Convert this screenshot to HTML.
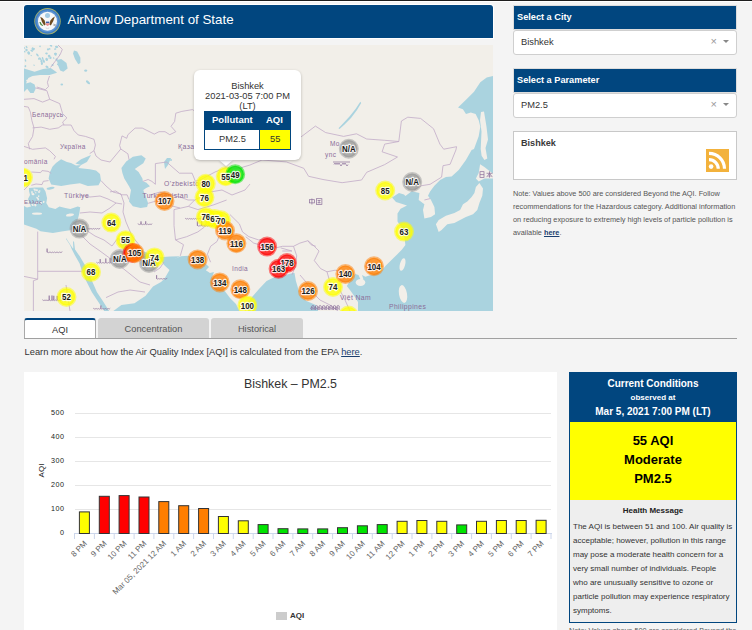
<!DOCTYPE html>
<html><head><meta charset="utf-8">
<style>
html,body{margin:0;padding:0;}
body{width:752px;height:630px;overflow:hidden;background:#f4f4f4;position:relative;font-family:"Liberation Sans",sans-serif;color:#333;}
.abs{position:absolute;}
#topline{left:0;top:0;width:752px;height:1px;background:#1e1e1e;}
#topline2{left:0;top:1px;width:752px;height:1px;background:#fff;}
#hdrb{left:23px;top:4px;width:471px;height:35px;background:#fff;border-radius:4px 4px 0 0;}
#hdr{left:24px;top:5px;width:469px;height:33px;background:#01467f;border-radius:3px 3px 0 0;}
#hdr .t{position:absolute;left:43.5px;top:7px;font-size:13.35px;color:#fff;white-space:nowrap;line-height:16px;}
#mapwrap{left:24px;top:45px;width:469px;height:266px;overflow:hidden;}
#map text.mk{font:bold 8.8px "Liberation Sans",sans-serif;fill:#1a1a1a;text-anchor:middle;stroke:#fff;stroke-width:2.2px;stroke-opacity:.85;paint-order:stroke;stroke-linejoin:round;}
.popup{left:194px;top:70px;width:107px;height:90px;background:#fff;border-radius:6px;box-shadow:0 1px 3px rgba(0,0,0,.25);}
.tipc{left:218.5px;top:159.5px;width:0;height:0;border-left:7px solid transparent;border-right:7px solid transparent;border-top:6.5px solid #fff;filter:drop-shadow(0 1px 1px rgba(0,0,0,.2));}
.popup .ln{position:absolute;left:0;width:107px;text-align:center;font-size:9.3px;line-height:10px;color:#333;}
.ptab{left:204px;top:111px;width:87px;height:39px;border:1px solid #01467f;box-sizing:border-box;background:#fff;}
.ptab .h{position:absolute;left:0;top:0;width:85px;height:18px;background:#01467f;}
.ptab .h span{position:absolute;top:2px;font:bold 9.5px "Liberation Sans",sans-serif;color:#fff;}
.ptab .y{position:absolute;left:54px;top:18px;width:30px;height:19px;background:#ffff00;border-left:1px solid #01467f;}
.ptab .c{position:absolute;top:22px;font-size:9.3px;color:#333;}
.sh{left:513px;width:222px;height:23px;background:#01467f;border:1px solid #ddd;}
.sh span{position:absolute;left:3px;top:5.5px;font:bold 9.2px "Liberation Sans",sans-serif;color:#fff;}
.sel{left:513px;width:222px;height:23px;background:#fff;border:1px solid #cfcfcf;border-radius:3px;}
.sel span{position:absolute;left:7px;top:6px;font-size:9.3px;color:#333;}
.sel .x{left:auto;right:19px;top:3.5px;font-size:11px;color:#999;}
.sel .ar{position:absolute;right:7px;top:9px;width:0;height:0;border-left:3.5px solid transparent;border-right:3.5px solid transparent;border-top:3.5px solid #888;}
#cbox{left:513px;top:131px;width:222px;height:47px;background:#fff;border:1px solid #c8c8c8;}
#cbox span{position:absolute;left:7px;top:5.8px;font:bold 9.1px "Liberation Sans",sans-serif;color:#3a3a3a;}
#rss{left:706px;top:149px;width:23px;height:23px;background:#f3b23c;}
#note{left:513px;top:187px;width:230px;font-size:7.33px;line-height:13px;color:#555;}
#note a{color:#1a3f6f;font-weight:bold;text-decoration:underline;}
.tab{top:318px;height:20px;box-sizing:border-box;text-align:center;font-size:9.3px;line-height:18px;border-radius:3px 3px 0 0;}
#tab1{left:24px;width:72px;background:#fff;border:1px solid #a9a9a9;border-top:2px solid #01467f;border-bottom:none;color:#333;line-height:20px;}
#tab2{left:98px;width:111px;background:#d3d3d3;color:#555;line-height:23px;}
#tab3{left:211px;width:92px;background:#d3d3d3;color:#555;line-height:23px;}
#tabline{left:24px;top:338px;width:713px;height:1px;background:#a0a0a0;}
#learn{left:24.5px;top:347px;font-size:9.33px;line-height:11px;color:#333;white-space:nowrap;}
#learn a{color:#1a3f6f;text-decoration:underline;}
.yl{font:7.2px "Liberation Sans",sans-serif;fill:#222;letter-spacing:.5px;}
.xl{font:8px "Liberation Sans",sans-serif;fill:#666;}
.ct{font:12.4px "Liberation Sans",sans-serif;fill:#333;}
.yt{font:8px "Liberation Sans",sans-serif;fill:#222;}
.lg{font:bold 8px "Liberation Sans",sans-serif;fill:#333;}
#cc{left:569px;top:372px;width:168px;height:251px;box-sizing:border-box;border:1px solid #01467f;background:#eee;}
#cc .hd{position:absolute;left:0;top:0;width:166px;height:49px;background:#01467f;color:#fff;text-align:center;font-weight:bold;}
#cc .yl2{position:absolute;left:0;top:49px;width:166px;height:78px;background:#ffff00;color:#000;text-align:center;font-weight:bold;font-size:13px;line-height:19px;}
#cc .hm{position:absolute;left:0;top:133px;width:166px;text-align:center;font:bold 8px "Liberation Sans",sans-serif;color:#222;}
#cc .bd{position:absolute;left:3px;top:147px;width:162px;font-size:8px;line-height:14px;color:#333;}
#note2{left:569px;top:625.5px;font-size:7.33px;color:#555;white-space:nowrap;}
</style></head>
<body>
<div id="topline" class="abs"></div><div id="topline2" class="abs"></div>
<div id="hdrb" class="abs"></div>
<div id="hdr" class="abs">
  <svg class="abs" style="left:9px;top:2px" width="29" height="29" viewBox="0 0 29 29">
    <circle cx="14.5" cy="14.3" r="13.2" fill="#a7b26a"/>
    <circle cx="14.5" cy="14.3" r="12.4" fill="#3f7ec6"/>
    <circle cx="14.5" cy="14.3" r="11" fill="#5b93d2"/>
    <circle cx="14.5" cy="14.3" r="9.5" fill="#f7f8f8"/>
    <circle cx="14.5" cy="8.5" r="2.5" fill="#a3cbe4"/>
    <path d="M7.2 9.8 Q9.5 10.5 11.6 13.5 L12.6 17.5 L11.2 18.5 Q8.5 15 7.2 9.8z" fill="#6e4b1f"/>
    <path d="M21.8 9.6 Q19.5 10.5 17.4 13.5 L16.4 17.5 L17.8 18.5 Q20.5 15 21.8 9.6z" fill="#6e4b1f"/>
    <rect x="12.9" y="14.6" width="3.4" height="1.6" fill="#3b5ca8"/>
    <path d="M12.9 16.2 h3.4 v1.6 q-1.7 2.2 -3.4 0z" fill="#ea8d91"/>
    <path d="M6.3 15.2 q0.6 2.8 3.4 3.9 l0.6 -0.6 q-2 -1.2 -2.6 -3.6z" fill="#4c8a45"/>
    <path d="M20.5 17 l2.8 1.2 M20.2 18 l2.8 1.2" stroke="#9a9a9a" stroke-width="0.8"/>
    <path d="M12.5 20 q2 2 4 0 l-0.5 1.8 h-3z" fill="#d8d8d8"/>
  </svg>
  <div class="t">AirNow Department of State</div>
</div>
<div id="mapwrap" class="abs">
<svg id="map" width="469" height="266" viewBox="24 45 469 266">
<rect x="0" y="0" width="800" height="400" fill="#f2efe9"/>
<polygon fill="#aad3df" points="493.0,75.9 486.7,77.5 480.3,82.2 474.0,91.7 466.0,99.7 458.0,107.6 462.9,109.2 466.0,114.0 470.8,112.4 475.6,114.0 478.7,120.3 480.3,126.7 478.7,136.2 474.0,148.9 471.6,150.0 465.9,160.0 458.7,170.0 451.6,176.4 445.9,177.1 440.1,180.0 434.4,185.7 430.1,191.4 428.0,195.7 431.0,200.0 434.4,207.1 435.1,214.3 431.0,217.0 424.4,218.6 423.0,210.0 424.4,204.3 418.7,200.0 419.4,192.9 411.7,191.3 405.4,196.0 404.0,194.4 399.0,193.0 392.0,197.6 396.0,202.0 407.0,205.5 400.6,208.7 397.5,213.5 397.5,221.4 400.6,226.0 404.0,234.0 405.4,245.0 402.0,249.6 394.0,257.6 385.9,265.6 380.3,272.1 371.0,274.9 365.4,276.8 362.0,275.0 363.5,279.5 361.0,280.5 358.5,275.0 355.1,274.0 350.5,280.0 346.8,286.1 350.5,290.7 355.1,297.2 358.0,301.9 358.0,312.0 494.0,312.0 494.0,75.9"/>
<polygon fill="#aad3df" points="159.6,257.6 164.3,257.2 174.0,259.0 181.0,256.2 188.3,255.8 196.0,258.5 204.3,262.2 209.0,267.0 205.8,270.2 210.0,273.0 214.0,272.0 212.0,277.0 216.0,280.0 220.0,284.0 224.0,290.0 230.0,298.0 236.0,304.0 240.0,312.0 248.0,312.0 248.0,302.0 252.0,297.0 259.0,289.0 266.6,281.0 274.6,277.0 283.9,275.6 287.9,274.3 293.2,273.0 294.5,273.0 295.9,281.0 298.0,288.0 299.9,294.3 306.5,300.9 315.8,304.9 318.5,312.0 112.0,312.0 121.4,305.0 134.5,303.2 145.6,295.7 153.0,286.4 161.0,282.0 164.3,279.0 169.5,270.0 163.8,264.7"/>
<polygon fill="#aad3df" points="65.9,238.8 70.0,245.0 71.7,248.9 75.3,256.1 79.6,263.4 81.8,270.6 86.1,280.7 91.9,292.3 97.7,300.9 104.9,312.0 109.8,312.0 102.8,300.9 97.0,292.3 91.9,280.7 88.3,270.6 84.0,263.4 79.6,256.1 75.0,249.5 74.0,241.5 73.0,241.5 73.3,248.5 72.6,248.0 67.3,240.0 66.5,238.5"/>
<polygon fill="#aad3df" points="118.0,238.0 124.0,241.0 130.0,245.0 140.0,250.0 148.0,253.0 156.0,256.0 159.6,257.6 150.0,259.0 140.0,257.0 130.0,255.0 124.0,251.0 120.0,245.0"/>
<polygon fill="#aad3df" points="29.0,188.0 35.0,187.4 43.0,187.4 45.5,191.6 47.1,198.2 46.3,203.1 48.8,207.3 55.4,208.9 59.5,206.4 65.3,208.1 70.3,208.9 77.7,206.4 80.2,207.3 79.4,213.1 77.7,219.7 74.0,228.0 71.7,230.1 61.6,231.6 52.9,233.0 40.5,231.2 36.4,228.8 29.0,226.3 24.0,224.6 24.0,206.0 27.0,207.5 31.0,206.5 29.5,203.0 28.0,199.0 30.0,195.0 29.0,191.0"/>
<polygon fill="#aad3df" points="52.6,166.6 50.0,172.0 48.6,178.6 51.2,184.6 61.2,186.0 70.0,184.6 79.9,183.3 87.8,186.0 98.5,185.3 101.0,180.6 100.0,174.0 96.0,170.5 89.7,169.3 78.3,167.9 81.1,165.0 76.0,165.5 71.0,163.0 66.9,162.1 61.1,159.3 56.0,163.0"/>
<polygon fill="#aad3df" points="75.4,163.6 81.1,159.3 91.1,155.0 86.9,162.1 81.1,165.0"/>
<polygon fill="#aad3df" points="121.4,168.1 126.2,161.4 132.9,156.7 141.4,155.2 145.7,158.6 143.3,163.3 137.6,167.1 134.8,169.0 138.6,171.9 142.4,178.6 142.9,181.4 146.2,182.4 150.0,186.2 146.2,188.1 143.3,190.0 144.3,192.9 146.2,197.6 148.1,203.3 147.1,207.1 140.5,208.1 132.9,206.2 129.0,201.4 130.0,195.7 131.0,190.0 129.0,186.2 124.3,178.6 122.4,172.9"/>
<polygon fill="#aad3df" points="24.0,68.5 34.6,71.7 43.0,69.0 50.6,68.0 56.0,71.7 57.0,72.7 49.5,74.9 40.0,74.9 32.5,76.0 28.3,78.0 26.0,83.4 30.4,82.3 34.6,84.4 35.7,88.7 33.6,93.0 30.4,93.0 27.2,88.7 24.0,92.0"/>
<polygon fill="#aad3df" points="57.0,60.0 61.2,58.9 66.5,63.1 67.6,68.5 63.4,71.7 60.2,70.6 58.0,65.3"/>
<polygon fill="#aad3df" points="74.0,50.4 77.2,51.4 80.4,57.8 80.4,63.1 78.3,64.2 75.0,58.9 73.0,53.6"/>
<polygon fill="#aad3df" points="360.3,101.8 361.2,103.0 357.0,110.0 351.0,118.0 344.0,125.0 339.5,129.0 338.5,128.2 343.0,123.5 349.5,116.5 355.5,109.0"/>
<polygon fill="#aad3df" points="164.0,162.0 167.0,158.0 171.0,158.0 168.0,165.0 165.0,169.0"/>
<polygon fill="#aad3df" points="159.6,257.2 170.0,256.5 180.0,256.2 175.0,259.0 169.0,262.0 164.0,262.0"/>
<polygon fill="#f2efe9" points="479.4,182.9 483.0,188.6 482.3,195.7 479.4,202.9 477.3,210.0 473.0,214.3 465.9,217.1 460.1,220.0 454.4,222.9 447.3,224.3 441.6,230.0 438.7,232.1 435.9,224.3 438.7,220.0 445.9,215.7 454.4,212.9 460.1,210.0 463.0,204.3 467.3,201.4 471.6,197.1 474.4,192.9 475.9,187.1"/>
<polygon fill="#f2efe9" points="480.1,164.3 484.4,167.1 490.1,171.4 494.0,174.3 494.0,178.6 484.4,178.6 478.7,181.4 475.9,178.6 478.7,172.9"/>
<polygon fill="#f2efe9" points="481.0,112.0 484.0,111.5 486.5,126.7 488.0,139.4 485.5,148.0 487.3,158.6 484.4,160.0 481.6,155.7 480.7,148.9 481.5,131.4 480.0,120.3"/>
<polygon fill="#f2efe9" points="26.0,80.0 30.0,79.0 33.0,80.0 31.0,82.0 27.0,82.0"/>
<ellipse cx="360.5" cy="282.5" rx="4.8" ry="3.4" transform="rotate(0 360.5 282.5)" fill="#f2efe9"/>
<ellipse cx="402.5" cy="264.5" rx="2.6" ry="6.5" transform="rotate(15 402.5 264.5)" fill="#f2efe9"/>
<ellipse cx="403.0" cy="294.0" rx="4.0" ry="9.0" transform="rotate(-10 403.0 294.0)" fill="#f2efe9"/>
<ellipse cx="70.0" cy="215.0" rx="4.0" ry="1.4" transform="rotate(-10 70.0 215.0)" fill="#f2efe9"/>
<ellipse cx="37.0" cy="213.7" rx="5.0" ry="1.1" transform="rotate(0 37.0 213.7)" fill="#f2efe9"/>
<ellipse cx="37.4" cy="198.0" rx="1.4" ry="0.8" transform="rotate(46 37.4 198.0)" fill="#f2efe9"/>
<ellipse cx="39.0" cy="192.0" rx="1.0" ry="0.9" transform="rotate(71 39.0 192.0)" fill="#f2efe9"/>
<ellipse cx="33.1" cy="193.9" rx="0.6" ry="1.0" transform="rotate(62 33.1 193.9)" fill="#f2efe9"/>
<ellipse cx="32.5" cy="204.7" rx="1.5" ry="0.9" transform="rotate(55 32.5 204.7)" fill="#f2efe9"/>
<ellipse cx="33.9" cy="189.2" rx="1.0" ry="0.4" transform="rotate(17 33.9 189.2)" fill="#f2efe9"/>
<ellipse cx="34.9" cy="189.5" rx="1.0" ry="0.8" transform="rotate(76 34.9 189.5)" fill="#f2efe9"/>
<ellipse cx="38.2" cy="199.2" rx="1.0" ry="0.9" transform="rotate(41 38.2 199.2)" fill="#f2efe9"/>
<ellipse cx="35.3" cy="205.0" rx="1.5" ry="1.1" transform="rotate(64 35.3 205.0)" fill="#f2efe9"/>
<ellipse cx="35.8" cy="192.7" rx="0.8" ry="0.5" transform="rotate(69 35.8 192.7)" fill="#f2efe9"/>
<ellipse cx="36.8" cy="202.5" rx="0.9" ry="1.2" transform="rotate(76 36.8 202.5)" fill="#f2efe9"/>
<ellipse cx="32.0" cy="192.4" rx="1.4" ry="0.8" transform="rotate(88 32.0 192.4)" fill="#f2efe9"/>
<ellipse cx="36.8" cy="190.2" rx="1.1" ry="1.0" transform="rotate(24 36.8 190.2)" fill="#f2efe9"/>
<ellipse cx="33.0" cy="194.3" rx="1.5" ry="1.0" transform="rotate(11 33.0 194.3)" fill="#f2efe9"/>
<ellipse cx="35.0" cy="190.6" rx="0.6" ry="1.0" transform="rotate(16 35.0 190.6)" fill="#f2efe9"/>
<ellipse cx="38.7" cy="196.2" rx="0.7" ry="1.0" transform="rotate(12 38.7 196.2)" fill="#f2efe9"/>
<ellipse cx="39.7" cy="190.9" rx="0.9" ry="0.6" transform="rotate(24 39.7 190.9)" fill="#f2efe9"/>
<ellipse cx="43.7" cy="201.9" rx="0.8" ry="1.1" transform="rotate(19 43.7 201.9)" fill="#f2efe9"/>
<ellipse cx="36.7" cy="202.7" rx="1.1" ry="0.5" transform="rotate(89 36.7 202.7)" fill="#f2efe9"/>
<ellipse cx="41.0" cy="203.0" rx="1.0" ry="1.5" transform="rotate(0 41.0 203.0)" fill="#f2efe9"/>
<ellipse cx="50.6" cy="188.3" rx="4.0" ry="1.2" transform="rotate(-10 50.6 188.3)" fill="#aad3df"/>
<ellipse cx="85.7" cy="70.6" rx="1.5" ry="1.2" transform="rotate(0 85.7 70.6)" fill="#aad3df"/>
<ellipse cx="88.0" cy="82.3" rx="2.5" ry="1.2" transform="rotate(40 88.0 82.3)" fill="#aad3df"/>
<ellipse cx="61.8" cy="84.4" rx="1.3" ry="1.0" transform="rotate(0 61.8 84.4)" fill="#aad3df"/>
<ellipse cx="171.0" cy="160.0" rx="1.0" ry="1.0" transform="rotate(0 171.0 160.0)" fill="#aad3df"/>
<ellipse cx="31.7" cy="50.7" rx="1.5" ry="0.8" transform="rotate(27 31.7 50.7)" fill="#aad3df"/>
<ellipse cx="26.6" cy="47.0" rx="1.3" ry="0.7" transform="rotate(54 26.6 47.0)" fill="#aad3df"/>
<ellipse cx="37.4" cy="55.0" rx="1.8" ry="0.9" transform="rotate(52 37.4 55.0)" fill="#aad3df"/>
<ellipse cx="55.2" cy="49.0" rx="0.8" ry="1.2" transform="rotate(74 55.2 49.0)" fill="#aad3df"/>
<ellipse cx="33.0" cy="49.2" rx="1.5" ry="1.3" transform="rotate(18 33.0 49.2)" fill="#aad3df"/>
<ellipse cx="58.2" cy="64.4" rx="1.3" ry="0.8" transform="rotate(9 58.2 64.4)" fill="#aad3df"/>
<ellipse cx="25.4" cy="66.2" rx="0.9" ry="1.1" transform="rotate(23 25.4 66.2)" fill="#aad3df"/>
<ellipse cx="53.7" cy="58.1" rx="1.0" ry="0.6" transform="rotate(65 53.7 58.1)" fill="#aad3df"/>
<ellipse cx="26.5" cy="50.0" rx="1.3" ry="1.2" transform="rotate(55 26.5 50.0)" fill="#aad3df"/>
<ellipse cx="34.1" cy="65.2" rx="0.8" ry="0.5" transform="rotate(24 34.1 65.2)" fill="#aad3df"/>
<ellipse cx="40.0" cy="46.3" rx="0.8" ry="0.8" transform="rotate(51 40.0 46.3)" fill="#aad3df"/>
<ellipse cx="28.7" cy="53.0" rx="1.7" ry="1.3" transform="rotate(59 28.7 53.0)" fill="#aad3df"/>
<ellipse cx="48.9" cy="57.9" rx="0.8" ry="0.5" transform="rotate(2 48.9 57.9)" fill="#aad3df"/>
<ellipse cx="56.8" cy="60.4" rx="1.8" ry="0.5" transform="rotate(57 56.8 60.4)" fill="#aad3df"/>
<ellipse cx="41.4" cy="61.1" rx="1.0" ry="1.3" transform="rotate(7 41.4 61.1)" fill="#aad3df"/>
<ellipse cx="43.7" cy="61.2" rx="1.7" ry="1.1" transform="rotate(63 43.7 61.2)" fill="#aad3df"/>
<ellipse cx="52.6" cy="65.1" rx="1.0" ry="1.0" transform="rotate(81 52.6 65.1)" fill="#aad3df"/>
<ellipse cx="55.4" cy="54.2" rx="1.5" ry="1.2" transform="rotate(52 55.4 54.2)" fill="#aad3df"/>
<ellipse cx="46.5" cy="53.4" rx="1.3" ry="1.0" transform="rotate(7 46.5 53.4)" fill="#aad3df"/>
<ellipse cx="47.0" cy="66.9" rx="1.7" ry="1.1" transform="rotate(35 47.0 66.9)" fill="#aad3df"/>
<ellipse cx="50.5" cy="57.8" rx="1.1" ry="1.2" transform="rotate(8 50.5 57.8)" fill="#aad3df"/>
<ellipse cx="51.0" cy="45.7" rx="1.3" ry="0.9" transform="rotate(21 51.0 45.7)" fill="#aad3df"/>
<ellipse cx="49.1" cy="55.9" rx="1.3" ry="1.2" transform="rotate(23 49.1 55.9)" fill="#aad3df"/>
<ellipse cx="24.4" cy="51.6" rx="1.4" ry="0.7" transform="rotate(15 24.4 51.6)" fill="#aad3df"/>
<ellipse cx="56.6" cy="59.5" rx="1.1" ry="1.2" transform="rotate(29 56.6 59.5)" fill="#aad3df"/>
<ellipse cx="48.0" cy="49.4" rx="1.1" ry="1.1" transform="rotate(82 48.0 49.4)" fill="#aad3df"/>
<ellipse cx="55.7" cy="53.5" rx="1.3" ry="0.8" transform="rotate(12 55.7 53.5)" fill="#aad3df"/>
<ellipse cx="41.9" cy="63.4" rx="1.6" ry="1.1" transform="rotate(86 41.9 63.4)" fill="#aad3df"/>
<ellipse cx="34.0" cy="48.7" rx="1.1" ry="0.7" transform="rotate(19 34.0 48.7)" fill="#aad3df"/>
<ellipse cx="38.9" cy="58.8" rx="1.2" ry="0.8" transform="rotate(76 38.9 58.8)" fill="#aad3df"/>
<ellipse cx="59.4" cy="55.0" rx="0.7" ry="0.5" transform="rotate(79 59.4 55.0)" fill="#aad3df"/>
<ellipse cx="25.5" cy="60.6" rx="1.3" ry="0.7" transform="rotate(71 25.5 60.6)" fill="#aad3df"/>
<ellipse cx="24.7" cy="48.0" rx="1.1" ry="0.5" transform="rotate(75 24.7 48.0)" fill="#aad3df"/>
<ellipse cx="32.5" cy="48.1" rx="0.7" ry="1.0" transform="rotate(40 32.5 48.1)" fill="#aad3df"/>
<ellipse cx="46.7" cy="59.4" rx="1.6" ry="1.3" transform="rotate(62 46.7 59.4)" fill="#aad3df"/>
<ellipse cx="31.2" cy="55.5" rx="0.8" ry="0.5" transform="rotate(42 31.2 55.5)" fill="#aad3df"/>
<ellipse cx="49.7" cy="48.9" rx="0.9" ry="0.8" transform="rotate(63 49.7 48.9)" fill="#aad3df"/>
<ellipse cx="42.7" cy="58.5" rx="1.5" ry="0.8" transform="rotate(71 42.7 58.5)" fill="#aad3df"/>
<ellipse cx="56.6" cy="46.9" rx="1.7" ry="1.1" transform="rotate(12 56.6 46.9)" fill="#aad3df"/>
<ellipse cx="40.3" cy="58.8" rx="1.7" ry="0.8" transform="rotate(51 40.3 58.8)" fill="#aad3df"/>
<polyline fill="none" stroke="#c2abc8" stroke-width="0.8" stroke-linejoin="round" points="58.0,45.0 62.3,49.3 60.2,54.6 50.6,67.4"/>
<polyline fill="none" stroke="#c2abc8" stroke-width="0.8" stroke-linejoin="round" points="49.5,76.0 47.4,82.3 48.5,86.6 45.3,89.7 36.8,87.0"/>
<polyline fill="none" stroke="#c2abc8" stroke-width="0.8" stroke-linejoin="round" points="35.4,87.9 46.9,90.7 49.7,99.3"/>
<polyline fill="none" stroke="#c2abc8" stroke-width="0.8" stroke-linejoin="round" points="24.0,99.3 34.0,98.6 42.6,102.1 49.7,99.3"/>
<polyline fill="none" stroke="#c2abc8" stroke-width="0.8" stroke-linejoin="round" points="49.7,99.3 59.7,103.6 62.6,113.6 66.9,117.9 62.6,122.1 64.0,125.0"/>
<polyline fill="none" stroke="#c2abc8" stroke-width="0.8" stroke-linejoin="round" points="24.0,106.4 28.3,107.1 30.4,112.1 31.9,120.7 34.0,127.9 32.6,136.4 28.3,143.6 29.7,149.3"/>
<polyline fill="none" stroke="#c2abc8" stroke-width="0.8" stroke-linejoin="round" points="32.6,127.9 41.1,127.1 49.7,129.3 58.3,127.9 62.6,125.0"/>
<polyline fill="none" stroke="#c2abc8" stroke-width="0.8" stroke-linejoin="round" points="62.6,125.0 71.1,125.0 74.0,130.7 78.3,135.0 85.4,136.4 94.0,139.3 95.4,145.0 94.0,150.7 89.7,153.6"/>
<polyline fill="none" stroke="#c2abc8" stroke-width="0.8" stroke-linejoin="round" points="24.0,146.4 32.6,149.3 45.4,147.9 49.7,150.7 55.4,156.4 54.0,159.3"/>
<polyline fill="none" stroke="#c2abc8" stroke-width="0.8" stroke-linejoin="round" points="31.3,172.0 40.6,172.6 42.0,170.6 48.0,171.3 51.2,173.3"/>
<polyline fill="none" stroke="#c2abc8" stroke-width="0.8" stroke-linejoin="round" points="31.3,185.3 36.0,184.0 42.0,184.6 43.3,181.3 48.6,180.6"/>
<polyline fill="none" stroke="#c2abc8" stroke-width="0.8" stroke-linejoin="round" points="94.0,150.7 96.0,156.0 101.0,160.0 110.0,162.0 120.8,149.0 119.6,145.5 122.0,135.9 126.7,138.3 127.9,134.7 135.1,128.1 142.3,128.1 154.3,134.1 159.0,131.7 165.0,131.7 169.8,134.7 175.8,131.7 171.0,126.3 174.6,121.5 175.8,113.2 181.8,111.4 192.5,109.6 205.0,118.0 220.0,120.0 240.0,118.0 255.0,124.0 262.0,132.0 275.0,132.0 286.0,140.0 300.0,137.7 315.4,126.1 325.7,132.6 343.6,136.4 356.5,133.8 366.7,139.0 384.7,140.3 398.8,141.5"/>
<polyline fill="none" stroke="#c2abc8" stroke-width="0.8" stroke-linejoin="round" points="120.8,149.0 127.9,153.8 129.1,159.8"/>
<polyline fill="none" stroke="#c2abc8" stroke-width="0.8" stroke-linejoin="round" points="101.0,180.6 106.0,186.0 113.0,192.0 121.0,194.0"/>
<polyline fill="none" stroke="#c2abc8" stroke-width="0.8" stroke-linejoin="round" points="80.0,195.0 90.0,197.0 100.0,196.0 108.0,199.0 116.0,203.0 122.0,204.0"/>
<polyline fill="none" stroke="#c2abc8" stroke-width="0.8" stroke-linejoin="round" points="24.0,190.0 28.0,186.0 30.0,182.0"/>
<polyline fill="none" stroke="#c2abc8" stroke-width="0.8" stroke-linejoin="round" points="155.4,163.6 155.4,184.3 151.9,181.4 148.1,179.5 142.9,181.4"/>
<polyline fill="none" stroke="#c2abc8" stroke-width="0.8" stroke-linejoin="round" points="110.0,191.9 115.7,191.0 121.4,194.8 127.1,194.8 129.0,199.5"/>
<polyline fill="none" stroke="#c2abc8" stroke-width="0.8" stroke-linejoin="round" points="148.1,203.3 154.8,201.4 159.5,199.5 165.0,204.0 172.0,206.0 180.0,208.0"/>
<polyline fill="none" stroke="#c2abc8" stroke-width="0.8" stroke-linejoin="round" points="155.4,163.6 166.6,162.0 179.4,173.2 192.1,173.2 195.3,181.2 200.0,180.0 215.0,172.0 225.0,168.0 240.0,168.0 250.0,165.0 262.0,160.0 286.3,161.9 303.8,168.3 308.6,176.3 323.0,179.5 342.1,182.7 361.6,180.0 366.7,172.3 384.7,164.6 397.5,157.0 382.1,151.8 384.7,144.1 398.8,141.5"/>
<polyline fill="none" stroke="#c2abc8" stroke-width="0.8" stroke-linejoin="round" points="398.8,141.5 401.4,121.0 407.8,117.2 420.6,118.4 433.5,128.7 439.9,144.1 443.7,149.2 456.6,146.7 455.9,150.0 450.1,164.3 443.0,165.7 441.6,177.1 430.1,184.3 421.6,185.7 414.0,190.0"/>
<polyline fill="none" stroke="#c2abc8" stroke-width="0.8" stroke-linejoin="round" points="424.4,200.0 430.1,198.6"/>
<polyline fill="none" stroke="#c2abc8" stroke-width="0.8" stroke-linejoin="round" points="150.0,195.0 160.0,192.0 172.0,195.0 180.0,197.0 188.0,200.0 194.7,200.0 188.3,206.4 174.0,209.6"/>
<polyline fill="none" stroke="#c2abc8" stroke-width="0.8" stroke-linejoin="round" points="194.7,200.0 210.0,192.0 222.0,190.0 232.0,195.0 245.0,190.0 250.0,184.0"/>
<polyline fill="none" stroke="#c2abc8" stroke-width="0.8" stroke-linejoin="round" points="188.3,206.4 197.9,209.6 213.8,204.8 226.6,200.0"/>
<polyline fill="none" stroke="#c2abc8" stroke-width="0.8" stroke-linejoin="round" points="121.0,194.0 124.0,203.0 123.0,212.0 126.0,222.0 132.0,236.0 140.0,246.0"/>
<polyline fill="none" stroke="#c2abc8" stroke-width="0.8" stroke-linejoin="round" points="174.0,209.6 174.0,225.5 175.5,239.9 183.5,244.7 180.3,255.8"/>
<polyline fill="none" stroke="#c2abc8" stroke-width="0.8" stroke-linejoin="round" points="175.5,239.9 186.7,236.7 197.9,231.9 204.3,227.1 207.4,220.7"/>
<polyline fill="none" stroke="#c2abc8" stroke-width="0.8" stroke-linejoin="round" points="220.2,233.5 217.0,241.5 210.6,246.3 207.4,254.3 210.6,262.2"/>
<polyline fill="none" stroke="#c2abc8" stroke-width="0.8" stroke-linejoin="round" points="229.8,214.4 239.4,223.9 242.5,231.9 248.9,236.7 258.5,239.9 270.0,238.3 276.0,247.9 282.3,246.3 293.5,246.3 299.9,243.1 307.9,240.7 311.0,244.7 315.8,246.3"/>
<polyline fill="none" stroke="#c2abc8" stroke-width="0.8" stroke-linejoin="round" points="245.7,236.7 253.7,243.1 264.9,246.3 272.0,248.0"/>
<polyline fill="none" stroke="#c2abc8" stroke-width="0.8" stroke-linejoin="round" points="280.7,247.9 291.9,251.0 282.3,251.0"/>
<polyline fill="none" stroke="#c2abc8" stroke-width="0.8" stroke-linejoin="round" points="293.5,246.3 296.7,255.8 295.1,267.0 291.9,275.0"/>
<polyline fill="none" stroke="#c2abc8" stroke-width="0.8" stroke-linejoin="round" points="307.9,240.7 314.3,246.3 319.0,251.0 314.3,260.6 320.6,268.6 327.0,271.8 335.0,270.2 345.0,272.0 352.0,276.0"/>
<polyline fill="none" stroke="#c2abc8" stroke-width="0.8" stroke-linejoin="round" points="327.0,271.8 330.2,283.0 339.8,290.0 345.0,300.0 350.0,311.0"/>
<polyline fill="none" stroke="#c2abc8" stroke-width="0.8" stroke-linejoin="round" points="300.0,275.0 306.0,282.0 312.0,292.0 320.0,300.0 330.0,305.0 338.0,311.0"/>
<polyline fill="none" stroke="#c2abc8" stroke-width="0.8" stroke-linejoin="round" points="80.0,213.0 90.0,212.0 102.0,213.0 110.0,208.0 116.0,203.0"/>
<polyline fill="none" stroke="#c2abc8" stroke-width="0.8" stroke-linejoin="round" points="86.0,230.0 95.0,236.0 104.0,240.0 112.0,246.0 118.0,238.0"/>
<polyline fill="none" stroke="#c2abc8" stroke-width="0.8" stroke-linejoin="round" points="80.0,232.0 84.0,238.0 90.0,244.0 100.0,251.0"/>
<polyline fill="none" stroke="#c2abc8" stroke-width="0.8" stroke-linejoin="round" points="37.7,231.6 37.7,279.2 33.4,280.7 33.4,311.0"/>
<polyline fill="none" stroke="#c2abc8" stroke-width="0.8" stroke-linejoin="round" points="24.0,276.4 37.7,279.2"/>
<polyline fill="none" stroke="#c2abc8" stroke-width="0.8" stroke-linejoin="round" points="37.7,271.3 81.8,271.3"/>
<polyline fill="none" stroke="#c2abc8" stroke-width="0.8" stroke-linejoin="round" points="100.0,251.0 115.0,262.0 125.0,270.0 140.0,282.0 150.0,285.0"/>
<polyline fill="none" stroke="#c2abc8" stroke-width="0.8" stroke-linejoin="round" points="106.0,297.6 118.0,292.0 130.0,290.0 145.0,292.0"/>
<polyline fill="none" stroke="#c2abc8" stroke-width="0.8" stroke-linejoin="round" points="164.0,262.0 160.0,268.0 154.0,272.0"/>
<polyline fill="none" stroke="#c2abc8" stroke-width="0.8" stroke-linejoin="round" points="66.0,285.0 70.0,311.0"/>
<text x="32" y="117" fill="#8a6d99" font-size="6.5" font-family="Liberation Sans" style="letter-spacing:.4px">Беларусь</text>
<text x="60" y="149" fill="#8a6d99" font-size="6.5" font-family="Liberation Sans" style="letter-spacing:.4px">Україна</text>
<text x="24" y="164" fill="#8a6d99" font-size="6.5" font-family="Liberation Sans" style="letter-spacing:.4px">omânia</text>
<text x="64" y="198" fill="#8a6d99" font-size="6.8" font-family="Liberation Sans" style="letter-spacing:.4px">Türkiye</text>
<text x="24" y="204" fill="#8a6d99" font-size="6" font-family="Liberation Sans" style="letter-spacing:.4px">Ελλάς</text>
<text x="178" y="149" fill="#8a6d99" font-size="7" font-family="Liberation Sans" style="letter-spacing:.4px">Қаза</text>
<text x="164" y="186" fill="#8a6d99" font-size="6.8" font-family="Liberation Sans" style="letter-spacing:.4px">O'zbekiston</text>
<text x="142.4" y="198" fill="#8a6d99" font-size="6.8" font-family="Liberation Sans" style="letter-spacing:.4px">Turkmenistan</text>
<text x="232" y="271" fill="#8a6d99" font-size="6.5" font-family="Liberation Sans" style="letter-spacing:.4px">India</text>
<text x="330" y="146" fill="#8a6d99" font-size="6.5" font-family="Liberation Sans" style="letter-spacing:.4px">Mo</text>
<text x="325" y="157" fill="#8a6d99" font-size="6.5" font-family="Liberation Sans" style="letter-spacing:.4px">ync</text>
<text x="340" y="300" fill="#8a6d99" font-size="6.8" font-family="Liberation Sans" style="letter-spacing:.4px">Việt Nam</text>
<text x="389" y="309" fill="#8a6d99" font-size="6.8" font-family="Liberation Sans" style="letter-spacing:.4px">Philippines</text>
<path d="M62.1 252.0 q-1.2 1.3 -2.4 0 q-1.3 1.3 -2.7 0 q-1.3 1.3 -2.6 0 q-0.8 1.3 -1.5 0 q-1.5 1.3 -2.9 0 q-1.4 1.3 -2.9 0 v-3.4 v3.4" fill="none" stroke="#8a6d99" stroke-width="0.8" opacity="0.8" stroke-linecap="round"/>
<path d="M66.0 300.0 q-0.9 1.3 -1.9 0 q-1.2 1.3 -2.4 0 v-2.9 v2.9 q-1.0 1.3 -1.9 0 q-1.3 1.3 -2.6 0 v-4.1 v4.1 q-0.9 1.3 -1.7 0 q-0.8 1.3 -1.7 0 v-4.2 v4.2 q-0.9 1.3 -1.8 0 v-4.5 v4.5 q-1.4 1.3 -2.8 0 v-4.4 v4.4 q-1.2 1.3 -2.3 0 q-0.9 1.3 -1.8 0 q-1.3 1.3 -2.5 0" fill="none" stroke="#8a6d99" stroke-width="0.8" opacity="0.8" stroke-linecap="round"/>
<path d="M219.0 225.5 q-1.4 1.3 -2.8 0 v-3.2 v3.2 q-0.9 1.3 -1.7 0 v-2.6 v2.6 q-1.0 1.3 -2.0 0 q-0.8 1.3 -1.5 0 q-1.0 1.3 -2.0 0 q-1.4 1.3 -2.7 0 q-1.0 1.3 -2.0 0 q-1.3 1.3 -2.6 0 v-4.5 v4.5 q-0.8 1.3 -1.5 0 q-1.4 1.3 -2.8 0 v-4.1 v4.1" fill="none" stroke="#8a6d99" stroke-width="0.8" opacity="0.8" stroke-linecap="round"/>
<path d="M209.0 218.5 q-1.0 1.3 -2.0 0 q-0.8 1.3 -1.5 0 v-2.9 v2.9 q-1.5 1.3 -2.9 0 v-4.0 v4.0 q-1.4 1.3 -2.9 0 q-1.0 1.3 -2.0 0 q-1.1 1.3 -2.3 0 q-0.8 1.3 -1.7 0 q-1.3 1.3 -2.7 0 q-0.8 1.3 -1.6 0 q-0.8 1.3 -1.6 0 q-1.2 1.3 -2.4 0" fill="none" stroke="#8a6d99" stroke-width="0.8" opacity="0.8" stroke-linecap="round"/>
<path d="M152.0 224.0 q-1.0 1.3 -2.0 0 q-1.2 1.3 -2.3 0 q-1.0 1.3 -2.0 0 v-2.7 v2.7 q-0.9 1.3 -1.7 0 q-1.5 1.3 -3.0 0 v-2.6 v2.6 q-1.5 1.3 -3.0 0" fill="none" stroke="#8a6d99" stroke-width="0.8" opacity="0.8" stroke-linecap="round"/>
<path d="M117.0 262.5 q-1.1 1.3 -2.1 0 v-3.7 v3.7 q-1.4 1.3 -2.7 0 q-1.1 1.3 -2.1 0 v-4.3 v4.3 q-0.8 1.3 -1.5 0 q-1.4 1.3 -2.8 0 v-4.0 v4.0 q-1.5 1.3 -2.9 0 q-1.3 1.3 -2.7 0 v-3.4 v3.4 q-0.9 1.3 -1.7 0 q-1.0 1.3 -1.9 0" fill="none" stroke="#8a6d99" stroke-width="0.8" opacity="0.8" stroke-linecap="round"/>
<path d="M167.0 278.5 q-1.5 1.3 -3.0 0 q-1.5 1.3 -3.0 0 q-1.1 1.3 -2.2 0 q-1.1 1.3 -2.2 0 v-3.3 v3.3" fill="none" stroke="#8a6d99" stroke-width="0.8" opacity="0.8" stroke-linecap="round"/>
<path d="M110.0 308.5 q-0.9 1.3 -1.7 0 q-1.5 1.3 -3.0 0 q-1.2 1.3 -2.4 0 q-1.0 1.3 -2.0 0 v-3.0 v3.0 q-1.3 1.3 -2.7 0 q-1.0 1.3 -2.0 0 q-1.3 1.3 -2.7 0" fill="none" stroke="#8a6d99" stroke-width="0.8" opacity="0.8" stroke-linecap="round"/>
<path d="M100.0 228.5 q-1.2 1.3 -2.5 0 q-1.0 1.3 -2.0 0 q-1.0 1.3 -1.9 0 q-1.3 1.3 -2.7 0 q-1.0 1.3 -1.9 0 q-1.2 1.3 -2.5 0" fill="none" stroke="#8a6d99" stroke-width="0.8" opacity="0.8" stroke-linecap="round"/>
<path d="M333.0 162.0 h17.0 M334.0 164.5 q1 -3 2 0 q1 -3 2 0 q1 -3 2 0 q1 3 2 0 q1 -3 2 0 q1 -3 2 0 q1 3 2 0" fill="none" stroke="#8a6d99" stroke-width="0.7"/>
<g fill="none" stroke="#8a6d99" stroke-width="0.7"><rect x="309.4" y="199.7" width="5" height="3.2"/><path d="M311.9 198.5 v6"/><rect x="316.4" y="198.7" width="5.5" height="5.8"/><path d="M317.6 200.5 h3 M317.6 202.7 h3 M319.1 200.3 v3"/></g>
<g fill="none" stroke="#8a6d99" stroke-width="0.7"><rect x="480.0" y="171.7" width="4" height="5.8"/><path d="M480.0 174.6 h4"/><path d="M486.5 173.3 h6 M489.5 171.3 v6.4 M489.5 173.3 l-2.8 3.8 M489.5 173.3 l2.8 3.8 M488.3 176.1 h2.4"/></g>
<g fill="none" stroke="#8a6d99" stroke-width="0.7"><path d="M311.7 309.5 a1.1 1.1 0 1 1 0.1 0 v-3.5 q1.5 -1 2.2 0 v4"/><path d="M315.3 309.5 a1.1 1.1 0 1 1 0.1 0 v-3.5 q1.5 -1 2.2 0 v4"/><path d="M318.9 309.5 a1.1 1.1 0 1 1 0.1 0 v-3.5 q1.5 -1 2.2 0 v4"/><path d="M322.5 309.5 a1.1 1.1 0 1 1 0.1 0 v-3.5 q1.5 -1 2.2 0 v4"/><path d="M326.1 309.5 a1.1 1.1 0 1 1 0.1 0 v-3.5 q1.5 -1 2.2 0 v4"/><path d="M329.7 309.5 a1.1 1.1 0 1 1 0.1 0 v-3.5 q1.5 -1 2.2 0 v4"/><path d="M333.3 309.5 a1.1 1.1 0 1 1 0.1 0 v-3.5 q1.5 -1 2.2 0 v4"/><path d="M336.9 309.5 a1.1 1.1 0 1 1 0.1 0 v-3.5 q1.5 -1 2.2 0 v4"/></g>
<circle cx="23.0" cy="177.6" r="8.6" fill="#ffff00" fill-opacity="0.78" stroke="#ffff00" stroke-width="2.8" stroke-opacity="0.5"/>
<circle cx="79.5" cy="228.6" r="8.6" fill="#999999" fill-opacity="0.78" stroke="#999999" stroke-width="2.8" stroke-opacity="0.5"/>
<circle cx="111.3" cy="222.6" r="8.6" fill="#ffff00" fill-opacity="0.78" stroke="#ffff00" stroke-width="2.8" stroke-opacity="0.5"/>
<circle cx="125.5" cy="240.2" r="8.6" fill="#ffff00" fill-opacity="0.78" stroke="#ffff00" stroke-width="2.8" stroke-opacity="0.5"/>
<circle cx="119.8" cy="259.0" r="8.6" fill="#999999" fill-opacity="0.78" stroke="#999999" stroke-width="2.8" stroke-opacity="0.5"/>
<circle cx="149.0" cy="263.0" r="8.6" fill="#999999" fill-opacity="0.78" stroke="#999999" stroke-width="2.8" stroke-opacity="0.5"/>
<circle cx="132.5" cy="253.0" r="8.6" fill="#ff0000" fill-opacity="0.78" stroke="#ff0000" stroke-width="2.8" stroke-opacity="0.5"/>
<circle cx="134.6" cy="253.2" r="8.6" fill="#ff7e00" fill-opacity="0.78" stroke="#ff7e00" stroke-width="2.8" stroke-opacity="0.5"/>
<circle cx="154.5" cy="257.4" r="8.6" fill="#ffff00" fill-opacity="0.78" stroke="#ffff00" stroke-width="2.8" stroke-opacity="0.5"/>
<circle cx="164.5" cy="201.0" r="8.6" fill="#ff7e00" fill-opacity="0.78" stroke="#ff7e00" stroke-width="2.8" stroke-opacity="0.5"/>
<circle cx="91.0" cy="272.0" r="8.6" fill="#ffff00" fill-opacity="0.78" stroke="#ffff00" stroke-width="2.8" stroke-opacity="0.5"/>
<circle cx="66.5" cy="297.0" r="8.6" fill="#ffff00" fill-opacity="0.78" stroke="#ffff00" stroke-width="2.8" stroke-opacity="0.5"/>
<circle cx="225.7" cy="176.3" r="8.6" fill="#ffff00" fill-opacity="0.78" stroke="#ffff00" stroke-width="2.8" stroke-opacity="0.5"/>
<circle cx="235.2" cy="174.3" r="8.6" fill="#00e400" fill-opacity="0.78" stroke="#00e400" stroke-width="2.8" stroke-opacity="0.5"/>
<circle cx="205.8" cy="183.7" r="8.6" fill="#ffff00" fill-opacity="0.78" stroke="#ffff00" stroke-width="2.8" stroke-opacity="0.5"/>
<circle cx="204.5" cy="197.3" r="8.6" fill="#ffff00" fill-opacity="0.78" stroke="#ffff00" stroke-width="2.8" stroke-opacity="0.5"/>
<circle cx="205.8" cy="217.0" r="8.6" fill="#ffff00" fill-opacity="0.78" stroke="#ffff00" stroke-width="2.8" stroke-opacity="0.5"/>
<circle cx="214.7" cy="219.0" r="8.6" fill="#ffff00" fill-opacity="0.78" stroke="#ffff00" stroke-width="2.8" stroke-opacity="0.5"/>
<circle cx="221.0" cy="220.3" r="8.6" fill="#ffff00" fill-opacity="0.78" stroke="#ffff00" stroke-width="2.8" stroke-opacity="0.5"/>
<circle cx="225.0" cy="230.5" r="8.6" fill="#ff7e00" fill-opacity="0.78" stroke="#ff7e00" stroke-width="2.8" stroke-opacity="0.5"/>
<circle cx="236.4" cy="243.3" r="8.6" fill="#ff7e00" fill-opacity="0.78" stroke="#ff7e00" stroke-width="2.8" stroke-opacity="0.5"/>
<circle cx="197.6" cy="259.4" r="8.6" fill="#ff7e00" fill-opacity="0.78" stroke="#ff7e00" stroke-width="2.8" stroke-opacity="0.5"/>
<circle cx="267.1" cy="246.6" r="8.6" fill="#ff0000" fill-opacity="0.78" stroke="#ff0000" stroke-width="2.8" stroke-opacity="0.5"/>
<circle cx="287.0" cy="263.0" r="8.6" fill="#ff0000" fill-opacity="0.78" stroke="#ff0000" stroke-width="2.8" stroke-opacity="0.5"/>
<circle cx="278.6" cy="268.8" r="8.6" fill="#ff0000" fill-opacity="0.78" stroke="#ff0000" stroke-width="2.8" stroke-opacity="0.5"/>
<circle cx="219.8" cy="282.4" r="8.6" fill="#ff7e00" fill-opacity="0.78" stroke="#ff7e00" stroke-width="2.8" stroke-opacity="0.5"/>
<circle cx="240.3" cy="289.3" r="8.6" fill="#ff7e00" fill-opacity="0.78" stroke="#ff7e00" stroke-width="2.8" stroke-opacity="0.5"/>
<circle cx="247.4" cy="305.4" r="8.6" fill="#ffff00" fill-opacity="0.78" stroke="#ffff00" stroke-width="2.8" stroke-opacity="0.5"/>
<circle cx="308.0" cy="291.0" r="8.6" fill="#ff7e00" fill-opacity="0.78" stroke="#ff7e00" stroke-width="2.8" stroke-opacity="0.5"/>
<circle cx="333.0" cy="287.0" r="8.6" fill="#ffff00" fill-opacity="0.78" stroke="#ffff00" stroke-width="2.8" stroke-opacity="0.5"/>
<circle cx="345.4" cy="274.0" r="8.6" fill="#ff7e00" fill-opacity="0.78" stroke="#ff7e00" stroke-width="2.8" stroke-opacity="0.5"/>
<circle cx="374.0" cy="266.3" r="8.6" fill="#ff7e00" fill-opacity="0.78" stroke="#ff7e00" stroke-width="2.8" stroke-opacity="0.5"/>
<circle cx="404.0" cy="231.6" r="8.6" fill="#ffff00" fill-opacity="0.78" stroke="#ffff00" stroke-width="2.8" stroke-opacity="0.5"/>
<circle cx="385.2" cy="190.5" r="8.6" fill="#ffff00" fill-opacity="0.78" stroke="#ffff00" stroke-width="2.8" stroke-opacity="0.5"/>
<circle cx="412.2" cy="182.0" r="8.6" fill="#999999" fill-opacity="0.78" stroke="#999999" stroke-width="2.8" stroke-opacity="0.5"/>
<circle cx="348.8" cy="148.7" r="8.6" fill="#999999" fill-opacity="0.78" stroke="#999999" stroke-width="2.8" stroke-opacity="0.5"/>
<circle cx="348.5" cy="315.5" r="8.6" fill="#ffff00" fill-opacity="0.78" stroke="#ffff00" stroke-width="2.8" stroke-opacity="0.5"/>
<text transform="translate(25.7,180.8) scale(0.9,1.05)" class="mk">1</text>
<text transform="translate(79.5,231.8) scale(0.9,1.05)" class="mk">N/A</text>
<text transform="translate(111.3,225.8) scale(0.9,1.05)" class="mk">64</text>
<text transform="translate(125.5,243.4) scale(0.9,1.05)" class="mk">55</text>
<text transform="translate(119.8,262.2) scale(0.9,1.05)" class="mk">N/A</text>
<text transform="translate(149.0,266.2) scale(0.9,1.05)" class="mk">N/A</text>

<text transform="translate(134.6,256.4) scale(0.9,1.05)" class="mk">105</text>
<text transform="translate(154.5,260.6) scale(0.9,1.05)" class="mk">74</text>
<text transform="translate(164.5,204.2) scale(0.9,1.05)" class="mk">107</text>
<text transform="translate(91.0,275.2) scale(0.9,1.05)" class="mk">68</text>
<text transform="translate(66.5,300.2) scale(0.9,1.05)" class="mk">52</text>
<text transform="translate(225.7,179.5) scale(0.9,1.05)" class="mk">55</text>
<text transform="translate(235.2,177.5) scale(0.9,1.05)" class="mk">49</text>
<text transform="translate(205.8,186.9) scale(0.9,1.05)" class="mk">80</text>
<text transform="translate(204.5,200.5) scale(0.9,1.05)" class="mk">76</text>
<text transform="translate(205.8,220.2) scale(0.9,1.05)" class="mk">76</text>
<text transform="translate(214.7,222.2) scale(0.9,1.05)" class="mk">67</text>
<text transform="translate(221.0,223.5) scale(0.9,1.05)" class="mk">70</text>
<text transform="translate(225.0,233.7) scale(0.9,1.05)" class="mk">119</text>
<text transform="translate(236.4,246.5) scale(0.9,1.05)" class="mk">116</text>
<text transform="translate(197.6,262.6) scale(0.9,1.05)" class="mk">138</text>
<text transform="translate(267.1,249.8) scale(0.9,1.05)" class="mk">156</text>
<text transform="translate(287.0,266.2) scale(0.9,1.05)" class="mk">178</text>
<text transform="translate(278.6,272.0) scale(0.9,1.05)" class="mk">163</text>
<text transform="translate(219.8,285.6) scale(0.9,1.05)" class="mk">134</text>
<text transform="translate(240.3,292.5) scale(0.9,1.05)" class="mk">148</text>
<text transform="translate(247.4,308.6) scale(0.9,1.05)" class="mk">100</text>
<text transform="translate(308.0,294.2) scale(0.9,1.05)" class="mk">126</text>
<text transform="translate(333.0,290.2) scale(0.9,1.05)" class="mk">74</text>
<text transform="translate(345.4,277.2) scale(0.9,1.05)" class="mk">140</text>
<text transform="translate(374.0,269.5) scale(0.9,1.05)" class="mk">104</text>
<text transform="translate(404.0,234.8) scale(0.9,1.05)" class="mk">63</text>
<text transform="translate(385.2,193.7) scale(0.9,1.05)" class="mk">85</text>
<text transform="translate(412.2,185.2) scale(0.9,1.05)" class="mk">N/A</text>
<text transform="translate(348.8,151.9) scale(0.9,1.05)" class="mk">N/A</text>

</svg>
</div>
<div class="tipc abs"></div>
<div class="popup abs">
  <div class="ln" style="top:11px">Bishkek</div>
  <div class="ln" style="top:21px">2021-03-05 7:00 PM</div>
  <div class="ln" style="top:31px">(LT)</div>
</div>
<div class="ptab abs">
  <div class="h"><span style="left:7px">Pollutant</span><span style="left:61px">AQI</span></div>
  <div class="y"></div>
  <span class="c" style="left:14px">PM2.5</span>
  <span class="c" style="left:65px">55</span>
</div>

<div class="sh abs" style="top:5px"><span>Select a City</span></div>
<div class="sel abs" style="top:30px"><span>Bishkek</span><span class="x">×</span><i class="ar"></i></div>
<div class="sh abs" style="top:68px"><span>Select a Parameter</span></div>
<div class="sel abs" style="top:93px"><span>PM2.5</span><span class="x">×</span><i class="ar"></i></div>
<div id="cbox" class="abs"><span>Bishkek</span></div>
<svg id="rss" class="abs" width="23" height="23" viewBox="0 0 23 23">
  <circle cx="5.1" cy="17.6" r="2.3" fill="#fff"/>
  <path d="M3 10.55 A9.25 9.25 0 0 1 12.25 19.8" fill="none" stroke="#fff" stroke-width="3.2"/>
  <path d="M3 4.3 A15.5 15.5 0 0 1 18.5 19.8" fill="none" stroke="#fff" stroke-width="3.2"/>
</svg>
<div id="note" class="abs">Note: Values above 500 are considered Beyond the AQI. Follow<br>recommendations for the Hazardous category. Additional information<br>on reducing exposure to extremely high levels of particle pollution is<br>available <a>here</a>.</div>

<div id="tab1" class="tab abs">AQI</div>
<div id="tab2" class="tab abs">Concentration</div>
<div id="tab3" class="tab abs">Historical</div>
<div id="tabline" class="abs"></div>
<div id="learn" class="abs">Learn more about how the Air Quality Index [AQI] is calculated from the EPA <a>here</a>.</div>

<svg width="533" height="258" viewBox="24 372 533 258" style="position:absolute;left:24px;top:372px">
<rect x="24" y="372" width="534" height="258" fill="#fff"/>
<text x="64.5" y="535.2" text-anchor="end" class="yl">0</text>
<rect x="75" y="509" width="476" height="1" fill="#e6e6e6"/>
<text x="64.5" y="511.2" text-anchor="end" class="yl">100</text>
<rect x="75" y="485" width="476" height="1" fill="#e6e6e6"/>
<text x="64.5" y="487.2" text-anchor="end" class="yl">200</text>
<rect x="75" y="461" width="476" height="1" fill="#e6e6e6"/>
<text x="64.5" y="463.2" text-anchor="end" class="yl">300</text>
<rect x="75" y="437" width="476" height="1" fill="#e6e6e6"/>
<text x="64.5" y="439.2" text-anchor="end" class="yl">400</text>
<rect x="75" y="413" width="476" height="1" fill="#e6e6e6"/>
<text x="64.5" y="415.2" text-anchor="end" class="yl">500</text>
<rect x="74" y="533" width="478" height="1" fill="#ccd6eb"/>
<rect x="74.0" y="533" width="1" height="6" fill="#ccd6eb"/>
<rect x="93.9" y="533" width="1" height="6" fill="#ccd6eb"/>
<rect x="113.7" y="533" width="1" height="6" fill="#ccd6eb"/>
<rect x="133.6" y="533" width="1" height="6" fill="#ccd6eb"/>
<rect x="153.4" y="533" width="1" height="6" fill="#ccd6eb"/>
<rect x="173.3" y="533" width="1" height="6" fill="#ccd6eb"/>
<rect x="193.1" y="533" width="1" height="6" fill="#ccd6eb"/>
<rect x="213.0" y="533" width="1" height="6" fill="#ccd6eb"/>
<rect x="232.8" y="533" width="1" height="6" fill="#ccd6eb"/>
<rect x="252.7" y="533" width="1" height="6" fill="#ccd6eb"/>
<rect x="272.5" y="533" width="1" height="6" fill="#ccd6eb"/>
<rect x="292.4" y="533" width="1" height="6" fill="#ccd6eb"/>
<rect x="312.2" y="533" width="1" height="6" fill="#ccd6eb"/>
<rect x="332.1" y="533" width="1" height="6" fill="#ccd6eb"/>
<rect x="352.0" y="533" width="1" height="6" fill="#ccd6eb"/>
<rect x="371.8" y="533" width="1" height="6" fill="#ccd6eb"/>
<rect x="391.7" y="533" width="1" height="6" fill="#ccd6eb"/>
<rect x="411.5" y="533" width="1" height="6" fill="#ccd6eb"/>
<rect x="431.4" y="533" width="1" height="6" fill="#ccd6eb"/>
<rect x="451.2" y="533" width="1" height="6" fill="#ccd6eb"/>
<rect x="471.1" y="533" width="1" height="6" fill="#ccd6eb"/>
<rect x="490.9" y="533" width="1" height="6" fill="#ccd6eb"/>
<rect x="510.8" y="533" width="1" height="6" fill="#ccd6eb"/>
<rect x="530.6" y="533" width="1" height="6" fill="#ccd6eb"/>
<rect x="550.5" y="533" width="1" height="6" fill="#ccd6eb"/>
<rect x="79.4" y="511.9" width="10" height="21.6" fill="#ffff00" stroke="#333" stroke-width="1"/>
<rect x="99.3" y="496.3" width="10" height="37.2" fill="#ff0000" stroke="#333" stroke-width="1"/>
<rect x="119.1" y="495.6" width="10" height="37.9" fill="#ff0000" stroke="#333" stroke-width="1"/>
<rect x="139.0" y="497.0" width="10" height="36.5" fill="#ff0000" stroke="#333" stroke-width="1"/>
<rect x="158.8" y="501.6" width="10" height="31.9" fill="#ff7e00" stroke="#333" stroke-width="1"/>
<rect x="178.7" y="505.7" width="10" height="27.8" fill="#ff7e00" stroke="#333" stroke-width="1"/>
<rect x="198.6" y="508.5" width="10" height="25.0" fill="#ff7e00" stroke="#333" stroke-width="1"/>
<rect x="218.4" y="516.5" width="10" height="17.0" fill="#ffff00" stroke="#333" stroke-width="1"/>
<rect x="238.3" y="520.8" width="10" height="12.7" fill="#ffff00" stroke="#333" stroke-width="1"/>
<rect x="258.1" y="524.6" width="10" height="8.9" fill="#00e400" stroke="#333" stroke-width="1"/>
<rect x="278.0" y="528.7" width="10" height="4.8" fill="#00e400" stroke="#333" stroke-width="1"/>
<rect x="297.8" y="528.9" width="10" height="4.6" fill="#00e400" stroke="#333" stroke-width="1"/>
<rect x="317.7" y="528.9" width="10" height="4.6" fill="#00e400" stroke="#333" stroke-width="1"/>
<rect x="337.5" y="527.7" width="10" height="5.8" fill="#00e400" stroke="#333" stroke-width="1"/>
<rect x="357.4" y="525.8" width="10" height="7.7" fill="#00e400" stroke="#333" stroke-width="1"/>
<rect x="377.2" y="524.6" width="10" height="8.9" fill="#00e400" stroke="#333" stroke-width="1"/>
<rect x="397.1" y="521.3" width="10" height="12.2" fill="#ffff00" stroke="#333" stroke-width="1"/>
<rect x="416.9" y="520.5" width="10" height="13.0" fill="#ffff00" stroke="#333" stroke-width="1"/>
<rect x="436.8" y="521.3" width="10" height="12.2" fill="#ffff00" stroke="#333" stroke-width="1"/>
<rect x="456.7" y="524.9" width="10" height="8.6" fill="#00e400" stroke="#333" stroke-width="1"/>
<rect x="476.5" y="521.3" width="10" height="12.2" fill="#ffff00" stroke="#333" stroke-width="1"/>
<rect x="496.4" y="520.5" width="10" height="13.0" fill="#ffff00" stroke="#333" stroke-width="1"/>
<rect x="516.2" y="520.5" width="10" height="13.0" fill="#ffff00" stroke="#333" stroke-width="1"/>
<rect x="536.1" y="520.3" width="10" height="13.2" fill="#ffff00" stroke="#333" stroke-width="1"/>
<text transform="translate(87.4,544) rotate(-45)" text-anchor="end" class="xl">8 PM</text>
<text transform="translate(107.3,544) rotate(-45)" text-anchor="end" class="xl">9 PM</text>
<text transform="translate(127.1,544) rotate(-45)" text-anchor="end" class="xl">10 PM</text>
<text transform="translate(147.0,544) rotate(-45)" text-anchor="end" class="xl">11 PM</text>
<text transform="translate(166.8,544) rotate(-45)" text-anchor="end" class="xl">Mar 05, 2021 12 AM</text>
<text transform="translate(186.7,544) rotate(-45)" text-anchor="end" class="xl">1 AM</text>
<text transform="translate(206.6,544) rotate(-45)" text-anchor="end" class="xl">2 AM</text>
<text transform="translate(226.4,544) rotate(-45)" text-anchor="end" class="xl">3 AM</text>
<text transform="translate(246.3,544) rotate(-45)" text-anchor="end" class="xl">4 AM</text>
<text transform="translate(266.1,544) rotate(-45)" text-anchor="end" class="xl">5 AM</text>
<text transform="translate(286.0,544) rotate(-45)" text-anchor="end" class="xl">6 AM</text>
<text transform="translate(305.8,544) rotate(-45)" text-anchor="end" class="xl">7 AM</text>
<text transform="translate(325.7,544) rotate(-45)" text-anchor="end" class="xl">8 AM</text>
<text transform="translate(345.5,544) rotate(-45)" text-anchor="end" class="xl">9 AM</text>
<text transform="translate(365.4,544) rotate(-45)" text-anchor="end" class="xl">10 AM</text>
<text transform="translate(385.2,544) rotate(-45)" text-anchor="end" class="xl">11 AM</text>
<text transform="translate(405.1,544) rotate(-45)" text-anchor="end" class="xl">12 PM</text>
<text transform="translate(424.9,544) rotate(-45)" text-anchor="end" class="xl">1 PM</text>
<text transform="translate(444.8,544) rotate(-45)" text-anchor="end" class="xl">2 PM</text>
<text transform="translate(464.7,544) rotate(-45)" text-anchor="end" class="xl">3 PM</text>
<text transform="translate(484.5,544) rotate(-45)" text-anchor="end" class="xl">4 PM</text>
<text transform="translate(504.4,544) rotate(-45)" text-anchor="end" class="xl">5 PM</text>
<text transform="translate(524.2,544) rotate(-45)" text-anchor="end" class="xl">6 PM</text>
<text transform="translate(544.1,544) rotate(-45)" text-anchor="end" class="xl">7 PM</text>
<text x="290.5" y="388" text-anchor="middle" class="ct">Bishkek – PM2.5</text>
<text transform="translate(43.5,470.5) rotate(-90)" text-anchor="middle" class="yt">AQI</text>
<rect x="276" y="612" width="11" height="8" fill="#ccc"/>
<text x="290" y="618.4" class="lg">AQI</text>
</svg>

<div id="cc" class="abs">
  <div class="hd">
    <div style="position:absolute;left:0;width:166px;top:5px;font-size:10px;line-height:11px">Current Conditions</div>
    <div style="position:absolute;left:0;width:166px;top:20px;font-size:8px;line-height:9px">observed at</div>
    <div style="position:absolute;left:0;width:166px;top:33px;font-size:10px;line-height:11px">Mar 5, 2021 7:00 PM (LT)</div>
  </div>
  <div class="yl2"><div style="position:absolute;left:0;width:166px;top:9px">55 AQI<br>Moderate<br>PM2.5</div></div>
  <div class="hm">Health Message</div>
  <div class="bd">The AQI is between 51 and 100. Air quality is acceptable; however, pollution in this range may pose a moderate health concern for a very small number of individuals. People<br>who are unusually sensitive to ozone or<br>particle pollution may experience respiratory<br>symptoms.</div>
</div>
<div id="note2" class="abs">Note: Values above 500 are considered Beyond the</div>
</body></html>
